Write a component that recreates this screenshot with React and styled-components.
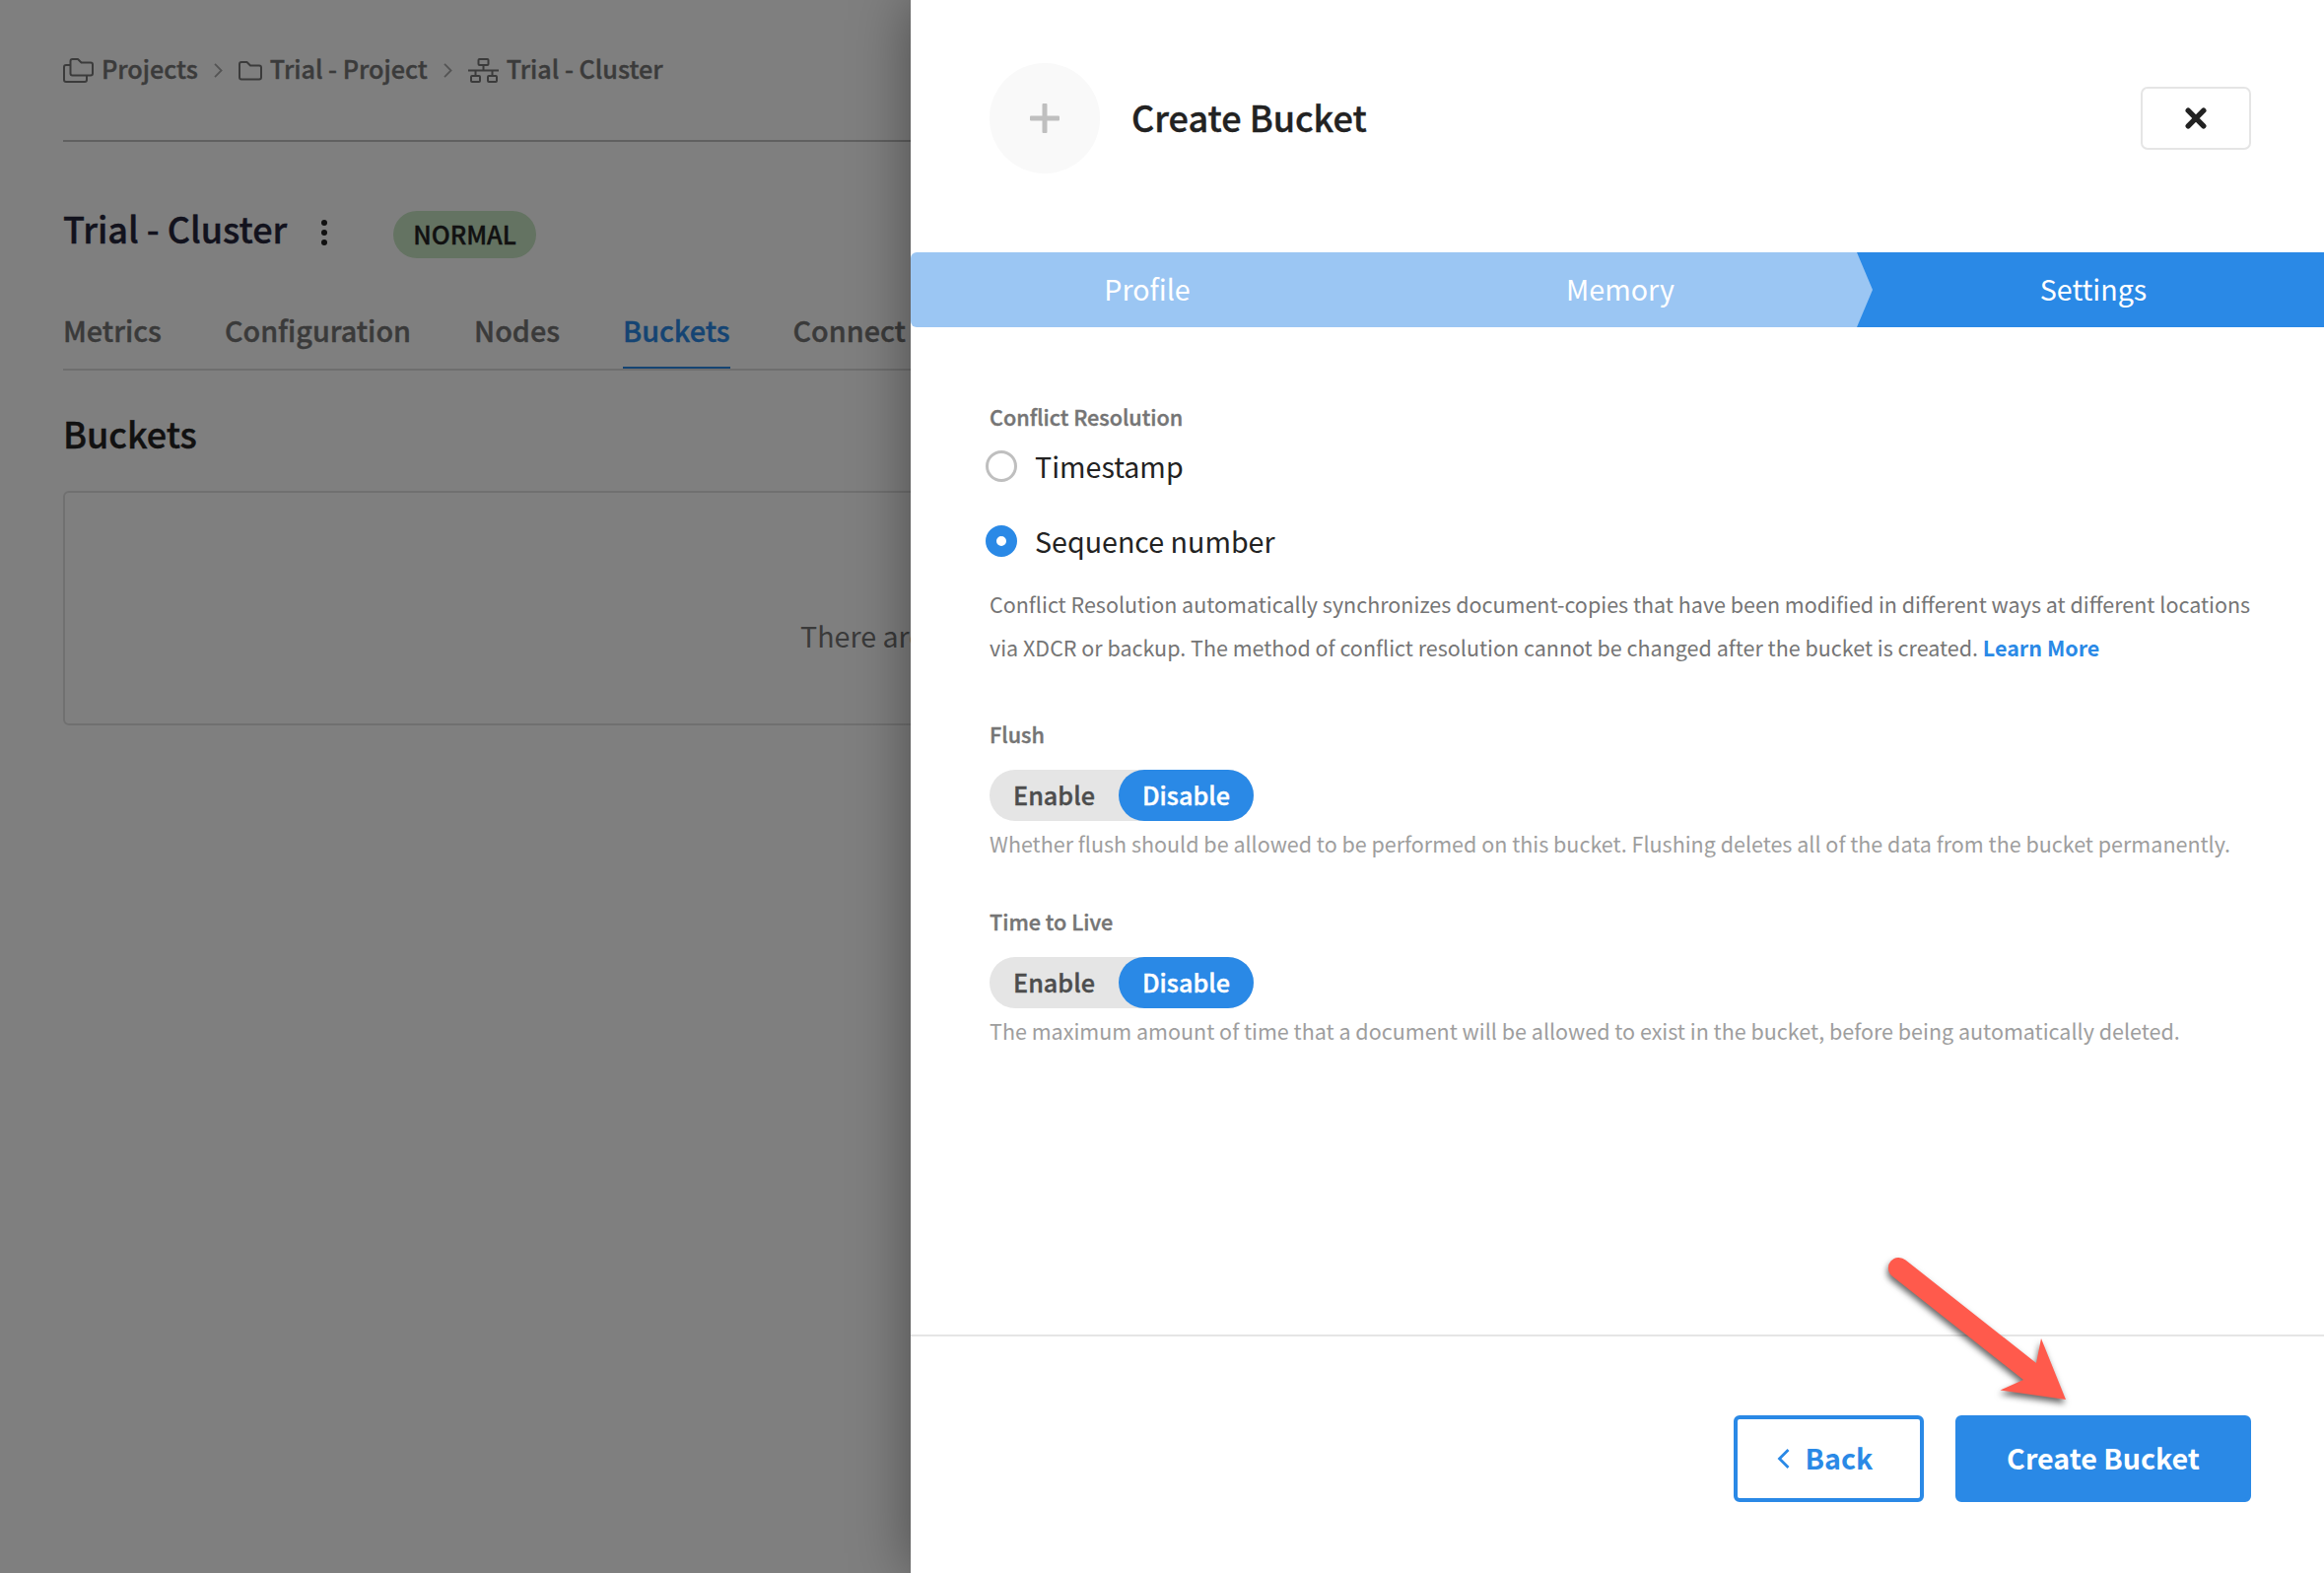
import React from "react";
import styled, { createGlobalStyle, css } from "styled-components";

const Global = createGlobalStyle`
  *, *::before, *::after { box-sizing: border-box; }
  html, body { margin: 0; overflow: hidden; }
  body {
    background: #fff;
    font-family: "Source Sans Pro", "Noto Sans CJK SC", "Noto Sans", sans-serif;
  }
  h1, h2, p { margin: 0; }
  button { font: inherit; padding: 0; margin: 0; }
`;

const size = { sm: "21.5px", lg: "28.64px" };
const semi = { sm: "21.6px", md: "25.16px", lg: "28.75px", xl: "36px" };
const blue = "#2a89e6";

const semibold = css`
  font-weight: 500;
  -webkit-text-stroke: 0.4px currentColor;
`;

const Screen = styled.div`
  position: relative;
  display: grid;
  grid-template-columns: 924px 1440px;
  width: 100vw;
  height: 1596px;
  overflow: hidden;
`;

const Page = styled.main`
  position: relative;
  display: flex;
  flex-direction: column;
  padding-left: 64px;
  overflow: hidden;
  background: #fff;
`;

const Scrim = styled.div`
  position: absolute;
  inset: 0;
  background: rgba(0, 0, 0, 0.5);
`;

const Breadcrumbs = styled.nav`
  display: flex;
  align-items: flex-start;
  flex: none;
  height: 144px;
  padding-top: 47px;
  border-bottom: 2px solid #c0c0c0;
  color: #777;
`;

const Crumb = styled.span`
  display: flex;
  align-items: center;
  gap: ${(p) => p.$gap}px;
  height: 50px;
  font-size: ${semi.md};
  ${semibold}
  line-height: 50px;
`;

const CrumbText = styled.span`
  margin-bottom: 6px;
`;

const CrumbBar = styled.div`
  display: flex;
  align-items: center;
  height: 50px;
`;

const CrumbChevron = styled.svg`
  width: 9px;
  height: 15px;
  margin: 0 15.5px 2px 16.5px;
`;

const TitleRow = styled.header`
  display: flex;
  align-items: center;
  flex: none;
  height: 50px;
  margin-top: 62px;
`;

const ClusterTitle = styled.h1`
  width: 262px;
  color: #25253a;
  font-size: ${semi.xl};
  ${semibold}
  line-height: 50px;
`;

const MenuDots = styled.svg`
  width: 6px;
  height: 26px;
  margin-top: 10px;
`;

const StatusBadge = styled.span`
  width: 145px;
  height: 48px;
  margin: 14px 0 0 67px;
  border-radius: 24px;
  background: #c8e6c4;
  color: #222;
  font-size: ${semi.md};
  ${semibold}
  line-height: 47px;
  text-align: center;
`;

const Tabs = styled.nav`
  display: flex;
  gap: 64px;
  flex: none;
  height: 65px;
  margin-top: 55px;
  border-bottom: 2px solid #dcdcdc;
`;

const Tab = styled.span`
  height: 63px;
  border-bottom: 2px solid ${(p) => (p.$active ? blue : "transparent")};
  color: ${(p) => (p.$active ? blue : "#757575")};
  font-size: ${semi.lg};
  ${semibold}
  line-height: 48px;
`;

const SectionTitle = styled.h2`
  margin-top: 38px;
  color: #222;
  font-size: ${semi.xl};
  ${semibold}
  line-height: 50px;
`;

const EmptyCard = styled.section`
  display: flex;
  align-items: center;
  flex: none;
  width: 1000px;
  height: 238px;
  margin-top: 34px;
  padding: 55px 0 0 746px;
  border: 2px solid #e0e0e0;
  border-radius: 6px;
  color: #757575;
  font-size: ${size.lg};
  line-height: 50px;
  white-space: nowrap;
`;

const Drawer = styled.aside`
  position: relative;
  z-index: 1;
  display: flex;
  flex-direction: column;
  background: #fff;
  box-shadow: 0 0 56px rgba(0, 0, 0, 0.4);
`;

const DrawerHeader = styled.header`
  display: flex;
  align-items: center;
  flex: none;
  height: 256px;
  padding: 0 80px 16px;
`;

const PlusCircle = styled.div`
  display: flex;
  align-items: center;
  justify-content: center;
  width: 112px;
  height: 112px;
  border-radius: 50%;
  background: #f9f9f9;
`;

const DrawerTitle = styled.h2`
  flex: 1;
  margin-left: 32px;
  color: #222;
  font-size: ${semi.xl};
  ${semibold}
  line-height: 56px;
  padding-bottom: 5px;
`;

const CloseButton = styled.button`
  display: flex;
  align-items: center;
  justify-content: center;
  width: 112px;
  height: 64px;
  border: 2px solid #e5e5e5;
  border-radius: 7px;
  background: #fff;
`;

const Steps = styled.ol`
  display: grid;
  grid-template-columns: repeat(3, 480px);
  flex: none;
  height: 76px;
  margin: 0;
  padding: 0;
  border-radius: 6px;
  background: #9bc6f3;
  overflow: hidden;
  list-style: none;
`;

const Step = styled.li`
  background: ${(p) => (p.$current ? blue : "transparent")};
  clip-path: ${(p) => (p.$current ? "polygon(0 0, 100% 0, 100% 100%, 0 100%, 16px 50%)" : "none")};
  color: #fff;
  font-size: ${size.lg};
  line-height: 74px;
  text-align: center;
`;

const Body = styled.div`
  display: flex;
  flex-direction: column;
  flex: none;
  height: 1022px;
  padding: 74px 80px 0;
`;

const Field = styled.section`
  display: flex;
  flex-direction: column;
  margin-bottom: ${(p) => p.$space || 0}px;
`;

const FieldLabel = styled.div`
  height: 34px;
  color: #757575;
  font-size: ${semi.sm};
  ${semibold}
  line-height: 34px;
`;

const RadioRow = styled.label`
  display: flex;
  align-items: center;
  height: 76px;
  margin-left: -4px;
  color: #222;
  font-size: ${size.lg};
  line-height: 76px;
`;

const RadioList = styled.div`
  display: flex;
  flex-direction: column;
  margin: -5px 0 4px;
`;

const RadioDot = styled.span`
  width: 32px;
  height: 32px;
  margin-right: 18px;
  border: ${(p) => (p.$checked ? `11px solid ${blue}` : "3px solid #bfbfbf")};
  border-radius: 50%;
  background: #fff;
`;

const Help = styled.p`
  color: ${(p) => p.$color};
  font-size: ${size.sm};
  line-height: 44px;
  white-space: nowrap;
`;

const Link = styled.a`
  color: ${blue};
  font-weight: 700;
`;

const Toggle = styled.div`
  display: flex;
  align-self: flex-start;
  width: 268px;
  height: 52px;
  margin: 19px 0 1px;
  border-radius: 26px;
  background: #e5e5e5;
`;

const ToggleOption = styled.span`
  width: ${(p) => (p.$on ? 137 : 131)}px;
  border-radius: 26px;
  background: ${(p) => (p.$on ? blue : "transparent")};
  color: ${(p) => (p.$on ? "#fff" : "#4d4d4d")};
  font-size: ${semi.md};
  ${semibold}
  line-height: 51px;
  text-align: center;
`;

const Footer = styled.footer`
  display: flex;
  justify-content: flex-end;
  gap: 32px;
  flex: 1;
  padding: 80px 80px 0;
  border-top: 2px solid #e5e5e5;
`;

const Button = styled.button`
  display: flex;
  align-items: center;
  justify-content: center;
  gap: 16px;
  width: ${(p) => p.$width}px;
  height: 88px;
  padding: 0 ${(p) => (p.$primary ? 0 : 8)}px 3px 0;
  border: 4px solid ${blue};
  border-radius: 6px;
  background: ${(p) => (p.$primary ? blue : "#fff")};
  color: ${(p) => (p.$primary ? "#fff" : blue)};
  font-size: ${size.lg};
  font-weight: 700;
  line-height: 76px;
`;

const Pointer = styled.svg`
  position: absolute;
  left: 1900px;
  top: 1260px;
  z-index: 2;
  width: 220px;
  height: 190px;
  filter: drop-shadow(-1px 4px 3px rgba(0, 0, 0, 0.6));
`;

const Glyph = styled.svg`
  flex: none;
  display: block;
`;

const BackChevron = styled(Glyph)`
  margin-top: 2px;
`;

const FoldersIcon = () => (
  <Glyph width="32" height="26" viewBox="0 0 32 26" fill="none" stroke="currentColor" strokeWidth="2" strokeLinejoin="round">
    <path d="M7.5 3 Q7.5 1 9.5 1 H15 L18.5 4.5 H28 Q30 4.5 30 6.5 V15.5 Q30 17.5 28 17.5 H9.5 Q7.5 17.5 7.5 15.5 Z" />
    <path d="M7.5 7 H3 Q1 7 1 9 V22 Q1 24 3 24 H22 Q24 24 24 22 V18" />
  </Glyph>
);

const FolderIcon = () => (
  <Glyph width="24" height="20" viewBox="0 0 24 20" fill="none" stroke="currentColor" strokeWidth="2" strokeLinejoin="round">
    <path d="M1 3 Q1 1 3 1 H8.5 L12 4.5 H21 Q23 4.5 23 6.5 V16.5 Q23 18.5 21 18.5 H3 Q1 18.5 1 16.5 Z" />
  </Glyph>
);

const ClusterIcon = () => (
  <Glyph width="32" height="26" viewBox="0 0 32 26" fill="none" stroke="currentColor" strokeWidth="2">
    <rect x="10.5" y="1" width="10" height="6" rx="1" />
    <rect x="3" y="18" width="9" height="6" rx="1" />
    <rect x="20" y="18" width="9" height="6" rx="1" />
    <path d="M0 12.5 H31 M15.5 7 V12.5 M7.5 12.5 V18 M24.5 12.5 V18" />
  </Glyph>
);

const Separator = () => (
  <CrumbChevron viewBox="0 0 9 15" fill="none" stroke="#a8a8a8" strokeWidth="1.8">
    <path d="M1 0.8 L7.6 7.5 L1 14.2" />
  </CrumbChevron>
);

const crumbs = [
  { text: "Projects", Icon: FoldersIcon, gap: 7 },
  { text: "Trial - Project", Icon: FolderIcon, gap: 8 },
  { text: "Trial - Cluster", Icon: ClusterIcon, gap: 7 },
];

const tabs = ["Metrics", "Configuration", "Nodes", "Buckets", "Connect"];

function EnableToggle() {
  return (
    <Toggle>
      <ToggleOption>Enable</ToggleOption>
      <ToggleOption $on>Disable</ToggleOption>
    </Toggle>
  );
}

export default function App() {
  return (
    <Screen>
      <Global />
      <Page>
        <Breadcrumbs>
          <CrumbBar>
            {crumbs.map(({ text, Icon, gap }, i) => (
              <React.Fragment key={text}>
                {i > 0 && <Separator />}
                <Crumb $gap={gap}>
                  <Icon />
                  <CrumbText>{text}</CrumbText>
                </Crumb>
              </React.Fragment>
            ))}
          </CrumbBar>
        </Breadcrumbs>
        <TitleRow>
          <ClusterTitle>Trial - Cluster</ClusterTitle>
          <MenuDots viewBox="0 0 6 26" fill="#222">
            <circle cx="3" cy="3" r="3" />
            <circle cx="3" cy="13" r="3" />
            <circle cx="3" cy="23" r="3" />
          </MenuDots>
          <StatusBadge>NORMAL</StatusBadge>
        </TitleRow>
        <Tabs>
          {tabs.map((t) => (
            <Tab key={t} $active={t === "Buckets"}>{t}</Tab>
          ))}
        </Tabs>
        <SectionTitle>Buckets</SectionTitle>
        <EmptyCard>There are</EmptyCard>
        <Scrim />
      </Page>
      <Drawer>
        <DrawerHeader>
          <PlusCircle>
            <Glyph width="30" height="30" viewBox="0 0 30 30" fill="#bfbfbf">
              <rect x="0" y="12.5" width="30" height="5" rx="1" />
              <rect x="12.5" y="0" width="5" height="30" rx="1" />
            </Glyph>
          </PlusCircle>
          <DrawerTitle>Create Bucket</DrawerTitle>
          <CloseButton aria-label="Close">
            <Glyph width="22" height="22" viewBox="0 0 22 22" stroke="#222" strokeWidth="5.4" strokeLinecap="round">
              <path d="M3.2 3.2 L18.8 18.8 M18.8 3.2 L3.2 18.8" />
            </Glyph>
          </CloseButton>
        </DrawerHeader>
        <Steps>
          <Step>Profile</Step>
          <Step>Memory</Step>
          <Step $current>Settings</Step>
        </Steps>
        <Body>
          <Field $space={49}>
            <FieldLabel>Conflict Resolution</FieldLabel>
            <RadioList>
              <RadioRow><RadioDot />Timestamp</RadioRow>
              <RadioRow><RadioDot $checked />Sequence number</RadioRow>
            </RadioList>
            <Help $color="#757575">
              Conflict Resolution automatically synchronizes document-copies that have been modified in different ways at different locations
              <br />
              via XDCR or backup. The method of conflict resolution cannot be changed after the bucket is created. <Link>Learn More</Link>
            </Help>
          </Field>
          <Field $space={40}>
            <FieldLabel>Flush</FieldLabel>
            <EnableToggle />
            <Help $color="#9e9e9e">
              Whether flush should be allowed to be performed on this bucket. Flushing deletes all of the data from the bucket permanently.
            </Help>
          </Field>
          <Field>
            <FieldLabel>Time to Live</FieldLabel>
            <EnableToggle />
            <Help $color="#9e9e9e">
              The maximum amount of time that a document will be allowed to exist in the bucket, before being automatically deleted.
            </Help>
          </Field>
        </Body>
        <Footer>
          <Button $width={193}>
            <BackChevron width="13" height="20" viewBox="0 0 13 20" fill="none" stroke="currentColor" strokeWidth="2.8">
              <path d="M11.5 1 L2.5 10 L11.5 19" />
            </BackChevron>
            Back
          </Button>
          <Button $width={300} $primary>Create Bucket</Button>
        </Footer>
      </Drawer>
      <Pointer viewBox="1900 1260 220 190" fill="#ff5a4c">
        <path d="M1933.5 1278.5 L2066 1383 L2071 1358 L2096 1420 L2029.5 1410.5 L2053 1400 L1919.5 1294.5 A10.5 10.5 0 0 1 1933.5 1278.5 Z" />
      </Pointer>
    </Screen>
  );
}
